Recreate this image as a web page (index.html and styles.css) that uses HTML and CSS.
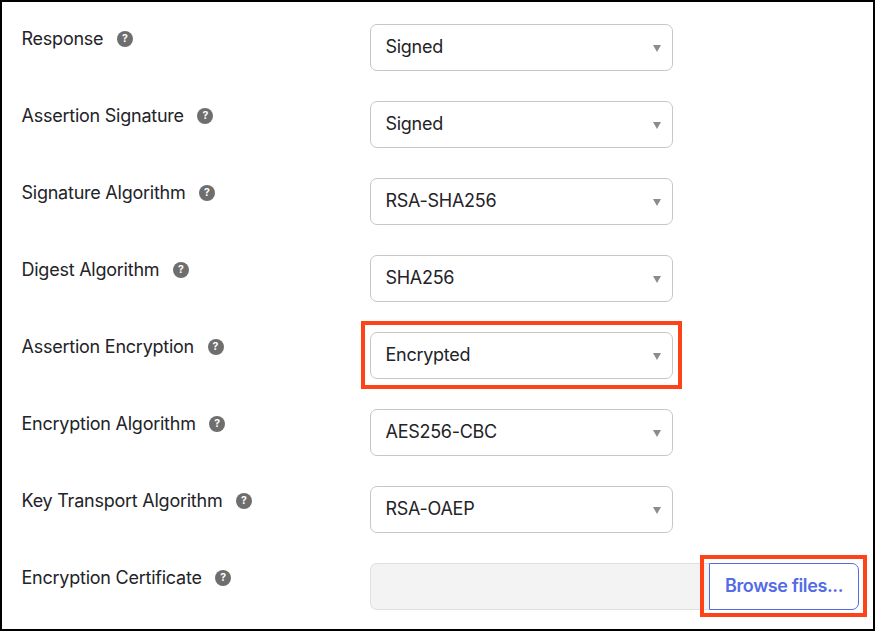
FILE: index.html
```html
<!DOCTYPE html>
<html lang="en">
<head>
  <meta charset="UTF-8">
  <title>SAML Settings</title>
  <link rel="stylesheet" href="styles.css">
</head>
<body>

  <form class="settings">
    <div class="row">
      <div class="label">Response <span class="help">?</span></div>
      <div class="field"><div class="select">Signed<i class="arrow"></i></div></div>
    </div>
    <div class="row">
      <div class="label">Assertion Signature <span class="help">?</span></div>
      <div class="field"><div class="select">Signed<i class="arrow"></i></div></div>
    </div>
    <div class="row">
      <div class="label">Signature Algorithm <span class="help">?</span></div>
      <div class="field"><div class="select">RSA-SHA256<i class="arrow"></i></div></div>
    </div>
    <div class="row">
      <div class="label">Digest Algorithm <span class="help">?</span></div>
      <div class="field"><div class="select">SHA256<i class="arrow"></i></div></div>
    </div>
    <div class="row">
      <div class="label">Assertion Encryption <span class="help">?</span></div>
      <div class="field marked"><div class="select">Encrypted<i class="arrow"></i></div></div>
    </div>
    <div class="row">
      <div class="label">Encryption Algorithm <span class="help">?</span></div>
      <div class="field"><div class="select">AES256-CBC<i class="arrow"></i></div></div>
    </div>
    <div class="row">
      <div class="label">Key Transport Algorithm <span class="help">?</span></div>
      <div class="field"><div class="select">RSA-OAEP<i class="arrow"></i></div></div>
    </div>
    <div class="row">
      <div class="label">Encryption Certificate <span class="help">?</span></div>
      <div class="upload">
        <div class="filename"></div>
        <div class="field marked browse"><button type="button" class="browse-btn">Browse files...</button></div>
      </div>
    </div>
  </form>

</body>
</html>
```

FILE: styles.css
```css
* { box-sizing: border-box; }
body {
  margin: 0; font-family: Inter, sans-serif; font-size: 18px;
  letter-spacing: -0.24px; color: #232328; background: #fff;
}
.settings {
  height: 631px; padding: 22px 0 0 19.5px; overflow: hidden;
  border: 2px solid #000;
  display: flex; flex-direction: column; gap: 30px;
}
.row { display: flex; height: 47px; flex-shrink: 0; }
.label { width: 348.5px; height: 29px; display: flex; align-items: center; gap: 13.5px; flex-shrink: 0; }
.help {
  width: 16px; height: 16px; border-radius: 50%; background: #6e6e6e; color: #fff;
  font-size: 10.5px; font-weight: 700; line-height: 16px; text-align: center; letter-spacing: 0;
  margin-top: 1px;
}
.field { position: relative; width: 303px; height: 47px; }
.select {
  height: 47px; padding: 0 11.5px 2px 14.5px; border: 1px solid #c7c7c7; border-radius: 7px;
  display: flex; align-items: center; justify-content: space-between; letter-spacing: -0.28px;
}
.arrow {
  border-left: 4.5px solid transparent; border-right: 4.5px solid transparent;
  border-top: 7px solid #8c8c8c; margin-top: 3px;
}
/* red callout frame around a field */
.marked::after {
  content: ""; position: absolute; inset: -11px -9px -10px -9px;
  border: 4px solid #ff4318; pointer-events: none;
}
.upload { display: flex; }
.filename { width: 339px; background: #f3f3f3; border: 1px solid #e0e0e0; border-right: 0; border-radius: 7px 0 0 7px; }
.browse { width: 150px; }
.browse::after { inset: -8px -8px -7px -9px; }
.browse-btn {
  width: 150px; height: 47px; padding: 0 0 2px; border: 1px solid #546be7; border-radius: 0 7px 7px 0;
  background: #fff; color: #546be7; font: 600 18px Inter, sans-serif; letter-spacing: -0.38px;
}
```
